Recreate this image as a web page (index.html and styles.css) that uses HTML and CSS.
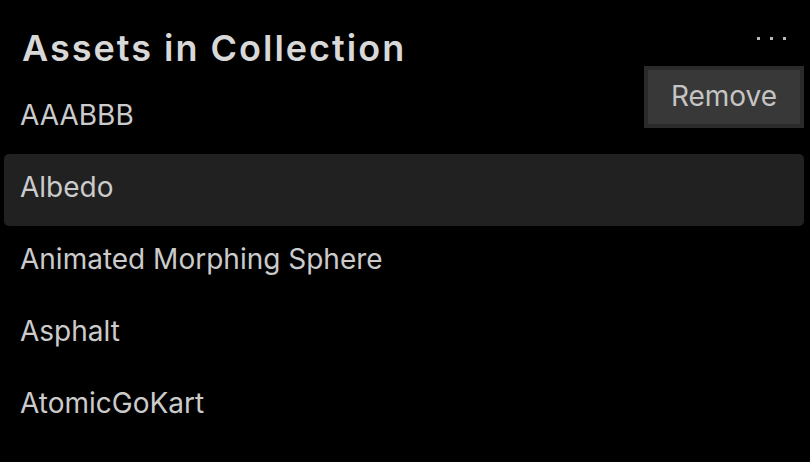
FILE: index.html
```html
<!DOCTYPE html>
<html lang="en">
<head>
<meta charset="UTF-8">
<meta name="viewport" content="width=device-width, initial-scale=1.0">
<title>Assets in Collection</title>
<link rel="stylesheet" href="styles.css">
</head>
<body>
<div id="panel">
  <div class="header">
    <h1>Assets in Collection</h1>
    <button class="more" aria-label="More options">
      <span></span><span></span><span></span>
    </button>
  </div>
  <ul class="asset-list">
    <li class="asset">AAABBB</li>
    <li class="asset selected">Albedo</li>
    <li class="asset">Animated Morphing Sphere</li>
    <li class="asset">Asphalt</li>
    <li class="asset">AtomicGoKart</li>
  </ul>
  <div class="menu">
    <button class="menu-item">Remove</button>
  </div>
</div>
</body>
</html>
```

FILE: styles.css
```css
body {
  margin: 0;
  padding: 0;
  background-color: #000;
  font-family: Inter, "Noto Sans", sans-serif;
  color: #cbcbcb;
}
#panel {
  position: relative;
  width: 810px;
  height: 462px;
  overflow: hidden;
}
.header {
  display: flex;
  align-items: flex-start;
  justify-content: space-between;
  height: 82px;
  padding: 26px 24px 0 22px;
  box-sizing: border-box;
}
h1 {
  margin: 0;
  font-size: 36px;
  line-height: 44px;
  font-weight: 600;
  letter-spacing: 2px;
  color: #d8d8d8;
}
.more {
  display: flex;
  gap: 10px;
  background: none;
  border: none;
  padding: 0;
  margin-top: 11px;
  cursor: pointer;
}
.more span {
  width: 3px;
  height: 3px;
  background-color: #b8b8b8;
}
.asset-list {
  list-style: none;
  margin: 0;
  padding: 0 6px 0 4px;
}
.asset {
  height: 72px;
  display: flex;
  align-items: center;
  padding-left: 16px;
  padding-bottom: 6px;
  box-sizing: border-box;
  font-size: 28px;
  border-radius: 5px;
}
.asset.selected {
  background-color: #212121;
}
.menu {
  position: absolute;
  top: 66px;
  left: 644px;
  width: 160px;
  height: 62px;
  background-color: #2b2b2b;
  padding: 4px;
  box-sizing: border-box;
}
.menu-item {
  width: 100%;
  height: 100%;
  border: none;
  background-color: #383838;
  color: #c4c4c4;
  font-family: inherit;
  font-size: 28px;
  padding: 0 0 2px;
  cursor: pointer;
}
```
